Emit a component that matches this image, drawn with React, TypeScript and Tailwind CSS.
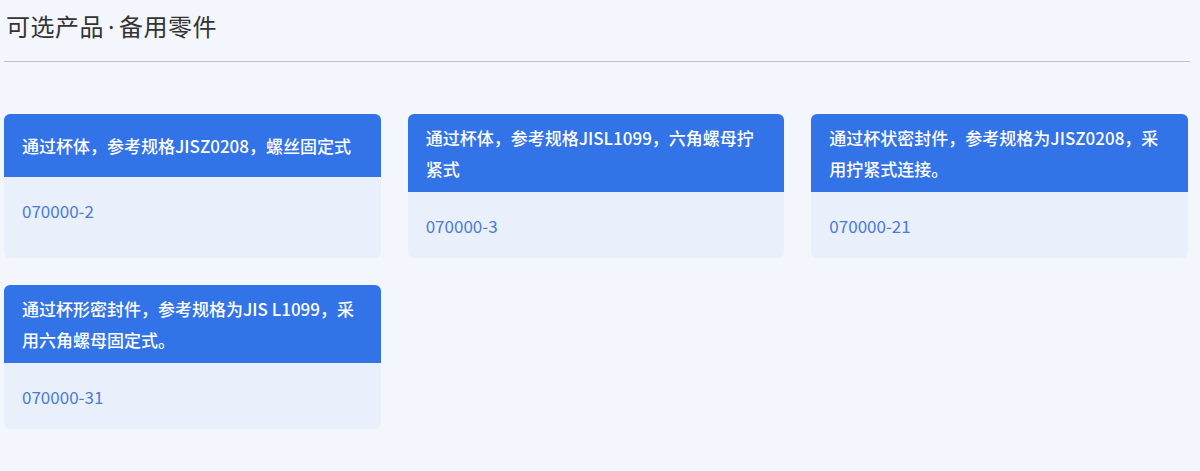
const parts = [
  { desc: "通过杯体，参考规格JISZ0208，螺丝固定式", code: "070000-2" },
  { desc: "通过杯体，参考规格JISL1099，六角螺母拧紧式", code: "070000-3" },
  { desc: "通过杯状密封件，参考规格为JISZ0208，采用拧紧式连接。", code: "070000-21" },
  { desc: "通过杯形密封件，参考规格为JIS L1099，采用六角螺母固定式。", code: "070000-31" },
];

function PartCard({ desc, code }: { desc: string; code: string }) {
  return (
    <div className="flex flex-col overflow-hidden rounded-md bg-[#e9effb]">
      {/* Header */}
      <div className="flex min-h-[63px] items-center bg-[#3373e8] py-2 pl-[18px] pr-[22px]">
        <p className="text-[17px] font-medium leading-[31px] text-white">{desc}</p>
      </div>
      {/* Code */}
      <div className="flex-1 px-[18px] pb-[22px] pt-6 text-[17px] leading-5 text-[#4a7bd8]">
        {code}
      </div>
    </div>
  );
}

export default function App() {
  return (
    <div
      className="min-h-[471px] w-full bg-[#f3f6fd] pl-1 pr-2.5"
      style={{ fontFamily: '"Noto Sans CJK SC", "Noto Sans", sans-serif' }}
    >
      <div className="border-b border-[#b9c1d1] pb-[17px] pt-[9px]">
        <h2 className="pl-0.5 text-[24px] font-normal leading-[34px] tracking-[0.5px] text-[#333]">
          可选产品
          <span className="mx-1 font-['Noto_Sans']">·</span>
          备用零件
        </h2>
      </div>

      <div className="mt-[52px] grid w-[1184px] grid-cols-3 gap-[27px]">
        {parts.map((p) => (
          <PartCard key={p.code} desc={p.desc} code={p.code} />
        ))}
      </div>
    </div>
  );
}
